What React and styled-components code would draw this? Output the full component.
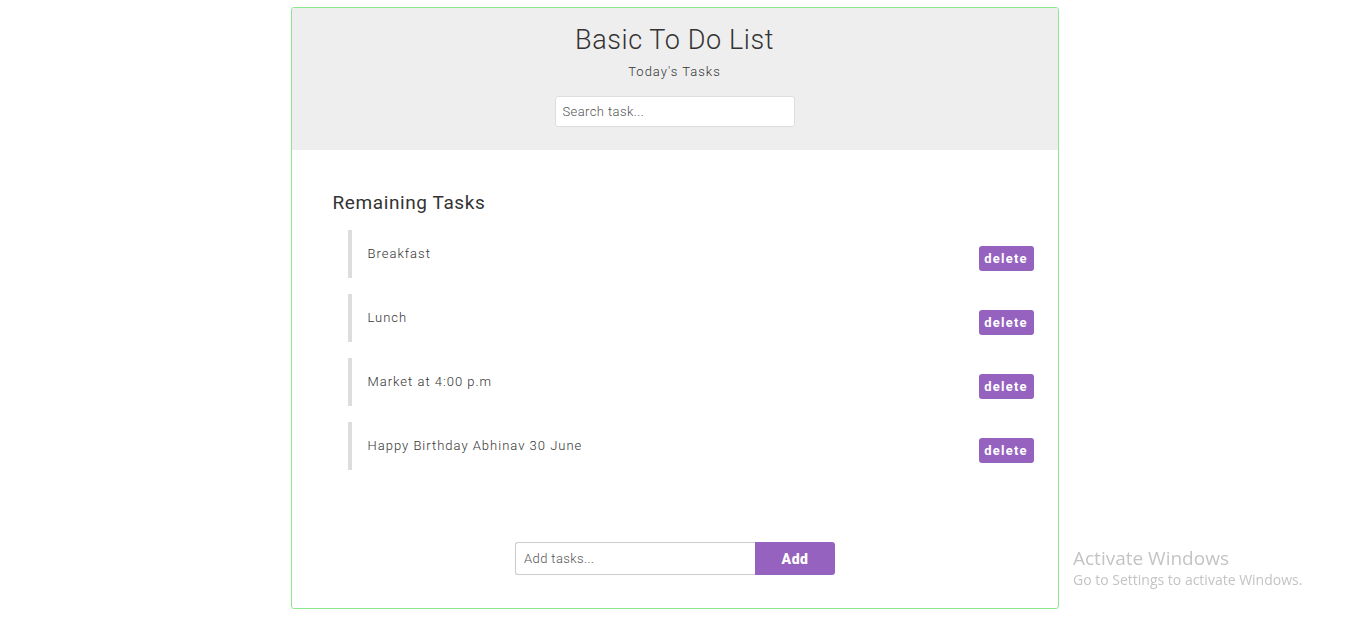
import React, { useState } from "react";
import styled, { createGlobalStyle } from "styled-components";

const GlobalStyle = createGlobalStyle`
   body {
      margin: 0;
      background: #fff;
      font-family: Roboto, "Liberation Sans", Arial, sans-serif;
   }
   * {
      box-sizing: border-box;
   }
`;

const Card = styled.div`
   width: 768px;
   margin: 7px auto 0;
   border: 1px solid #8ee88e;
   border-radius: 3px;
   overflow: hidden;
`;

const Header = styled.header`
   background: #eee;
   padding: 17px 0 23px;
   display: flex;
   flex-direction: column;
   align-items: center;
`;

const Title = styled.h1`
   margin: 0;
   font-size: 27px;
   line-height: 30px;
   font-weight: 300;
   color: #333;
   letter-spacing: 0.6px;
`;

const Subtitle = styled.p`
   margin: 9px 0 0;
   font-size: 13px;
   line-height: 16px;
   font-weight: 300;
   color: #333;
   letter-spacing: 1px;
`;

const SearchInput = styled.input`
   margin-top: 16px;
   width: 240px;
   height: 31px;
   padding: 0 7px;
   border: 1px solid #ddd;
   border-radius: 3px;
   font-family: inherit;
   font-size: 13px;
   font-weight: 300;
   color: #444;
   outline: none;
   letter-spacing: 0.4px;

   &::placeholder {
      color: #555;
   }
`;

const Body = styled.main`
   padding: 41px 24px 33px 23px;
`;

const Heading = styled.h2`
   margin: 0 0 0 18px;
   font-size: 19px;
   line-height: 24px;
   font-weight: 400;
   color: #333;
   letter-spacing: 0.6px;
`;

const List = styled.ul`
   list-style: none;
   margin: 15px 0 0 33px;
   padding: 0;
   display: flex;
   flex-direction: column;
   gap: 16px;
`;

const Item = styled.li`
   height: 48px;
   border-left: 4px solid #ddd;
   padding: 16px 0 0 16px;
   display: flex;
   align-items: flex-start;
   justify-content: space-between;
`;

const ItemText = styled.span`
   font-size: 13px;
   line-height: 16px;
   font-weight: 300;
   color: #333;
   letter-spacing: 1px;
`;

const DeleteButton = styled.button`
   width: 55px;
   height: 25px;
   border: none;
   border-radius: 3px;
   background: #9562c0;
   color: #fff;
   font-family: inherit;
   font-size: 13px;
   font-weight: 700;
   letter-spacing: 1.2px;
   padding: 0;
   cursor: pointer;
`;

const AddForm = styled.form`
   margin-top: 72px;
   padding-left: 2px;
   display: flex;
   justify-content: center;
`;

const AddInput = styled.input`
   width: 240px;
   height: 33px;
   padding: 0 8px;
   border: 1px solid #ccc;
   border-right: none;
   border-radius: 3px 0 0 3px;
   font-family: inherit;
   font-size: 13px;
   font-weight: 300;
   color: #444;
   outline: none;
   letter-spacing: 0.4px;

   &::placeholder {
      color: #555;
   }
`;

const AddButton = styled.button`
   width: 80px;
   height: 33px;
   border: none;
   border-radius: 0 3px 3px 0;
   background: #9562c0;
   color: #fff;
   font-family: inherit;
   font-size: 14px;
   font-weight: 900;
   letter-spacing: 0.5px;
   cursor: pointer;
`;

const Watermark = styled.div`
   position: fixed;
   left: 1073px;
   top: 546px;
   font-family: "Open Sans", "Noto Sans", sans-serif;
   color: #c4c4c4;
   pointer-events: none;
`;

const WatermarkTitle = styled.div`
   font-size: 19px;
   line-height: 24px;
`;

const WatermarkText = styled.div`
   font-size: 14px;
   line-height: 20px;
`;

const initialTasks = [
   "Breakfast",
   "Lunch",
   "Market at 4:00 p.m",
   "Happy Birthday Abhinav 30 June",
];

const App = () => {
   const [tasks, setTasks] = useState(initialTasks);
   const [search, setSearch] = useState("");
   const [newTask, setNewTask] = useState("");

   const addTask = (e) => {
      e.preventDefault();
      if (!newTask.trim()) return;
      setTasks([...tasks, newTask.trim()]);
      setNewTask("");
   };

   const visible = tasks.filter((t) =>
      t.toLowerCase().includes(search.toLowerCase())
   );

   return (
      <>
         <GlobalStyle />
         <Card>
            <Header>
               <Title>Basic To Do List</Title>
               <Subtitle>Today's Tasks</Subtitle>
               <SearchInput
                  placeholder="Search task..."
                  value={search}
                  onChange={(e) => setSearch(e.target.value)}
               />
            </Header>

            <Body>
               <Heading>Remaining Tasks</Heading>
               <List>
                  {visible.map((task) => (
                     <Item key={task}>
                        <ItemText>{task}</ItemText>
                        <DeleteButton
                           onClick={() =>
                              setTasks(tasks.filter((t) => t !== task))
                           }
                        >
                           delete
                        </DeleteButton>
                     </Item>
                  ))}
               </List>

               <AddForm onSubmit={addTask}>
                  <AddInput
                     placeholder="Add tasks..."
                     value={newTask}
                     onChange={(e) => setNewTask(e.target.value)}
                  />
                  <AddButton type="submit">Add</AddButton>
               </AddForm>
            </Body>
         </Card>

         <Watermark>
            <WatermarkTitle>Activate Windows</WatermarkTitle>
            <WatermarkText>Go to Settings to activate Windows.</WatermarkText>
         </Watermark>
      </>
   );
};

export default App;
